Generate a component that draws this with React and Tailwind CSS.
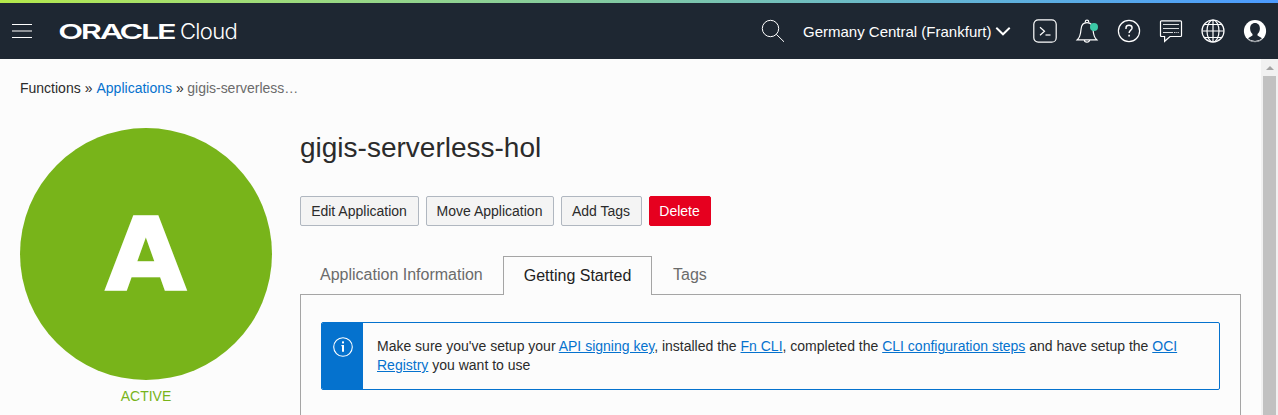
import React from "react";

const iconStroke = { fill: "none", stroke: "#fff", strokeWidth: 1.2 };

function SearchIcon() {
  return (
    <svg className="block h-6 w-6 shrink-0" viewBox="0 0 24 24" {...iconStroke} strokeWidth="1">
      <circle cx="9.5" cy="9.5" r="8.2" />
      <path d="M15.3 15.3L23 22.8" />
    </svg>
  );
}

function ChevronIcon() {
  return (
    <svg className="block h-[10px] w-4 shrink-0" viewBox="0 0 16 10" {...iconStroke} strokeWidth="1.9">
      <path d="M1.3 1.7L8 8.3L14.7 1.7" />
    </svg>
  );
}

function ShellIcon() {
  return (
    <svg className="block h-6 w-6" viewBox="0 0 24 24" {...iconStroke}>
      <rect x="0.8" y="0.8" width="22.4" height="22.4" rx="4.5" />
      <path d="M7 8.2L11.5 12.3L7 16.2" />
      <path d="M12.5 16H17.5" />
    </svg>
  );
}

function BellIcon() {
  return (
    <svg className="block h-6 w-6" viewBox="0 0 24 24" {...iconStroke}>
      <path d="M2.3 20.8H21.7C19.4 18.8 18.4 15.5 18 10.5C17.7 6 15.6 3.6 12 3.6C8.4 3.6 6.3 6 6 10.5C5.6 15.5 4.6 18.8 2.3 20.8Z" />
      <path d="M10.3 3.6V2.8A1.7 1.7 0 0 1 13.7 2.8V3.6M9.4 21A2.6 2.2 0 0 0 14.6 21" />
      <circle cx="19" cy="8" r="4" fill="#3cc8a6" stroke="none" />
    </svg>
  );
}

function HelpIcon() {
  return (
    <svg className="block h-6 w-6" viewBox="0 0 24 24" {...iconStroke}>
      <circle cx="12" cy="12" r="10.6" />
      <path d="M9 10V8.9C9 7.2 10.3 6.3 12 6.3S15.1 7.3 15.1 8.9C15.1 11 12.1 11.3 12.1 13.9" strokeWidth="1.4" />
      <path d="M12.1 15.8V17.6" strokeWidth="1.6" />
    </svg>
  );
}

function ChatIcon() {
  return (
    <svg className="block h-6 w-6" viewBox="0 0 24 24" {...iconStroke}>
      <path d="M2.5 1.8H21.5Q22.5 1.8 22.5 2.8V16.5Q22.5 17.5 21.5 17.5H11L5.6 22.3V17.5H2.5Q1.5 17.5 1.5 16.5V2.8Q1.5 1.8 2.5 1.8Z" />
      <path d="M4 5.5H20M4 9.5H20M4 13.5H14M15 13.5H16.4M17.3 13.5H18.4M19.2 13.5H20" stroke="#d8dadc" strokeWidth="1.2" />
    </svg>
  );
}

function GlobeIcon() {
  return (
    <svg className="block h-6 w-6" viewBox="0 0 24 24" {...iconStroke}>
      <circle cx="12" cy="12" r="11" />
      <ellipse cx="12" cy="12" rx="6" ry="11" />
      <path d="M12 1V23M1 12H23M3 5.5H21M3 18.5H21" />
    </svg>
  );
}

function ProfileIcon() {
  return (
    <svg className="block h-6 w-6" viewBox="0 0 24 24">
      <circle cx="12" cy="12" r="11.1" fill="#fff" />
      <path
        d="M12 4C8.9 4 7.1 6.3 7.1 9.5C7.1 11.9 8.1 14 9.5 15.1V16.5L5 19.2A10 10 0 0 0 19 19.2L14.5 16.5V15.1C15.9 14 16.9 11.9 16.9 9.5C16.9 6.3 15.1 4 12 4Z"
        fill="#1e2732"
      />
      <path d="M5.4 20.6A11 11 0 0 0 18.6 20.6" fill="none" stroke="#8b9197" strokeWidth="1" />
    </svg>
  );
}

function Brand() {
  return (
    <svg
      className="ml-[27px] block h-8 w-[180px] shrink-0"
      viewBox="0 0 180 32"
      fill="#fff"
      role="img"
      aria-label="Oracle Cloud"
    >
      <text x="-0.7" y="24" fontFamily="Inter, sans-serif" fontWeight="600" fontSize="20.5" letterSpacing="-1.5" textLength="116" lengthAdjust="spacingAndGlyphs">
        ORACLE
      </text>
      <text x="121" y="24.3" fontFamily="Inter, sans-serif" fontWeight="300" fontSize="21.5" letterSpacing="-0.7" textLength="57" lengthAdjust="spacingAndGlyphs">
        Cloud
      </text>
    </svg>
  );
}

function Header() {
  return (
    <header className="shrink-0">
      <div className="h-[3px] bg-linear-to-r from-[#b4e84a] via-[#80c8a4] to-[#4b9aff]" />
      <div className="flex h-14 items-center bg-[#1e2732] pr-[11px] pl-3 text-white">
        <button className="flex w-5 shrink-0 flex-col gap-[5px]" aria-label="Menu">
          <span className="h-px w-full bg-white" />
          <span className="h-[2px] w-full bg-[#8f9398]" />
          <span className="h-px w-full bg-white" />
        </button>
        <Brand />
        <div className="ml-auto flex items-center">
          <SearchIcon />
          <div className="ml-[18px] flex w-[208px] items-center justify-between">
            <span className="pt-[2px] text-[15px] whitespace-nowrap">Germany Central (Frankfurt)</span>
            <ChevronIcon />
          </div>
          <div className="ml-[22px] flex items-center gap-[18px]">
            <ShellIcon />
            <BellIcon />
            <HelpIcon />
            <ChatIcon />
            <GlobeIcon />
            <ProfileIcon />
          </div>
        </div>
      </div>
    </header>
  );
}

function Button({ children, className }) {
  return (
    <button className={"h-[30px] rounded-xs border pr-px text-sm whitespace-nowrap " + className}>{children}</button>
  );
}

function Link({ children }) {
  return (
    <a href="#" className="text-[#0572ce] underline">
      {children}
    </a>
  );
}

function Notice() {
  return (
    <div className="flex h-[68px] overflow-hidden rounded-xs border border-[#0572ce]">
      <div className="flex w-[41px] shrink-0 justify-center bg-[#0572ce] pt-[14px]">
        <svg className="block h-5 w-5" viewBox="0 0 20 20">
          <circle cx="10" cy="10" r="9.3" fill="none" stroke="#fff" strokeWidth="1.1" />
          <path d="M8.4 8H11V14.8H9V9.2H8.4Z" fill="#fff" />
          <rect x="9" y="4.4" width="2" height="2" fill="#fff" />
        </svg>
      </div>
      <p className="w-[830px] pt-[14px] pl-[14px] text-sm leading-[19px]">
        Make sure you've setup your <Link>API signing key</Link>, installed the <Link>Fn CLI</Link>, completed the{" "}
        <Link>CLI configuration steps</Link> and have setup the <Link>OCI Registry</Link> you want to use
      </p>
    </div>
  );
}

function Tabs() {
  return (
    <div className="mt-[30px] flex min-h-0 flex-1 flex-col">
      <div className="flex h-[39px] text-base text-[#6b6b6b]">
        <div className="flex w-[203px] items-center border-b border-[#a5a5a5] pl-5 whitespace-nowrap">Application Information</div>
        <div className="flex w-[149px] items-center justify-center border-x border-t border-[#a5a5a5] whitespace-nowrap text-[#222]">
          Getting Started
        </div>
        <div className="flex flex-1 items-center border-b border-[#a5a5a5] pl-[21px]">Tags</div>
      </div>
      <div className="flex-1 border-x border-[#a5a5a5] px-5 pt-[27px]">
        <Notice />
      </div>
    </div>
  );
}

function Scrollbar() {
  return (
    <div className="flex w-[17px] shrink-0 flex-col items-center bg-[#f1f1f1]">
      <div className="flex h-[17px] w-full items-center justify-center">
        <svg className="block h-1 w-2" viewBox="0 0 8 4">
          <path d="M0 4L4 0L8 4Z" fill="#a3a3a3" />
        </svg>
      </div>
      <div className="w-[13px] flex-1 bg-[#c1c1c1]" />
    </div>
  );
}

export default function App() {
  return (
    <div className="flex h-[415px] w-[1278px] flex-col overflow-hidden bg-[#fcfcfc] font-['Liberation_Sans',Arial,sans-serif] text-[#2b2b2b]">
      <Header />
      <div className="flex min-h-0 flex-1">
        <div className="flex min-w-0 flex-1 flex-col pl-5">
          <nav className="flex h-[69px] items-start gap-1 pt-[19px] text-sm">
            <span>Functions</span>
            <span>»</span>
            <a href="#" className="text-[#0572ce]">Applications</a>
            <span>»</span>
            <span className="-ml-[0.5px] tracking-[-0.02px] text-[#6b6b6b]">gigis-serverless…</span>
          </nav>
          <div className="flex min-h-0 flex-1 gap-7 pr-5">
            <aside className="flex w-[252px] shrink-0 flex-col items-center">
              <div className="flex h-[252px] w-[252px] shrink-0 items-center justify-center rounded-full bg-[#78b41a] pt-[2px] font-['DejaVu_Sans',sans-serif] text-[100.5px] leading-none font-bold text-white [-webkit-text-stroke:2.5px_white]">
                <span className="block scale-x-103">A</span>
              </div>
              <span className="mt-[6px] text-sm text-[#78b41a]">ACTIVE</span>
            </aside>
            <main className="flex min-w-0 flex-1 flex-col">
              <h1 className="h-[68px] text-[28px] leading-[40px]">gigis-serverless-hol</h1>
              <div className="flex shrink-0 gap-[7px]">
                <Button className="w-[119px] border-[#b0b7c0] bg-[#f4f4f4]">Edit Application</Button>
                <Button className="w-[128px] border-[#b0b7c0] bg-[#f4f4f4]">Move Application</Button>
                <Button className="w-[81px] border-[#b0b7c0] bg-[#f4f4f4]">Add Tags</Button>
                <Button className="w-[62px] border-[#e6001f] bg-[#e6001f] text-white">Delete</Button>
              </div>
              <Tabs />
            </main>
          </div>
        </div>
        <Scrollbar />
      </div>
    </div>
  );
}
